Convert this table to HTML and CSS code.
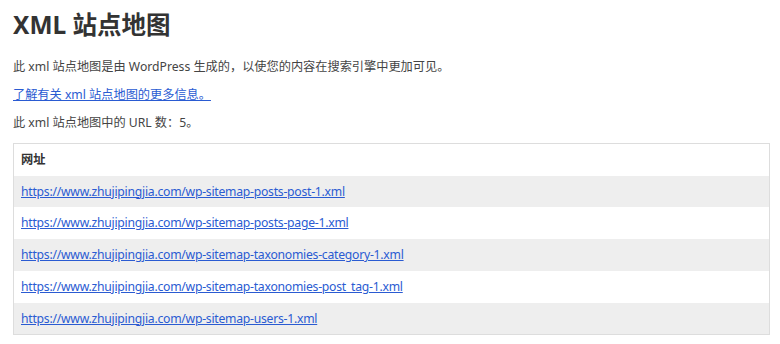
FILE: index.html
```html
<!DOCTYPE html>
<html lang="zh-CN">
<head>
<meta charset="utf-8">
<title>XML 站点地图</title>
<link rel="stylesheet" href="styles.css">
</head>
<body>
<div class="sitemap">
  <h1 class="title">XML 站点地图</h1>
  <p class="text">此 xml 站点地图是由 WordPress 生成的，以使您的内容在搜索引擎中更加可见。</p>
  <p class="text"><a class="link" href="#">了解有关 xml 站点地图的更多信息。</a></p>
  <p class="text">此 xml 站点地图中的 URL 数：5。</p>
  <table class="sitemap-table">
    <thead>
      <tr><th class="cell head">网址</th></tr>
    </thead>
    <tbody>
      <tr class="row odd"><td class="cell"><a class="link url" href="#">https://www.zhujipingjia.com/wp-sitemap-posts-post-1.xml</a></td></tr>
      <tr class="row"><td class="cell"><a class="link url" href="#">https://www.zhujipingjia.com/wp-sitemap-posts-page-1.xml</a></td></tr>
      <tr class="row odd"><td class="cell"><a class="link url" href="#">https://www.zhujipingjia.com/wp-sitemap-taxonomies-category-1.xml</a></td></tr>
      <tr class="row"><td class="cell"><a class="link url" href="#">https://www.zhujipingjia.com/wp-sitemap-taxonomies-post_tag-1.xml</a></td></tr>
      <tr class="row odd"><td class="cell"><a class="link url" href="#">https://www.zhujipingjia.com/wp-sitemap-users-1.xml</a></td></tr>
    </tbody>
  </table>
</div>
</body>
</html>
```

FILE: styles.css
```css
html, body {
  margin: 0;
  padding: 0;
  background: #fff;
}
body {
  color: #444;
  font-family: "Noto Sans", "Noto Sans CJK SC", sans-serif;
  font-size: 12.2px;
}
.sitemap {
  padding: 0 10px 0 13px;
}
.title {
  font-size: 24.5px;
  line-height: 32px;
  font-weight: 700;
  margin: 9px 0 18px;
  color: #333;
}
.text {
  line-height: 16px;
  margin: 12px 0;
}
.link {
  color: #2a5bd2;
  text-decoration: underline;
}
.url {
  letter-spacing: -0.25px;
}
.sitemap-table {
  width: 100%;
  border: 1px solid #ddd;
  border-collapse: collapse;
}
.cell {
  padding: 8px 7px;
  line-height: 15.7px;
  text-align: left;
}
.head {
  font-weight: 700;
  color: #333;
}
.row.odd .cell {
  background: #eee;
}
```
